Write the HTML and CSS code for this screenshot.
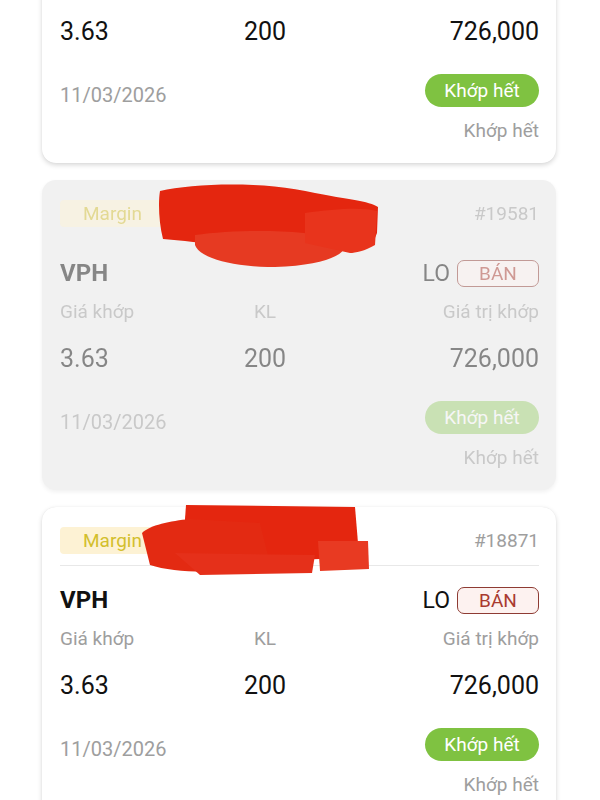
FILE: index.html
```html
<!DOCTYPE html>
<html lang="vi">
<head>
<meta charset="utf-8">
<title>Orders</title>
<link rel="stylesheet" href="styles.css">
</head>
<body>
<div class="list">
  <div class="card">
    <div class="content">
      <div class="head"><span class="badge">Margin</span><span class="hash">#19600</span></div>
      <div class="divider"></div>
      <div class="sym-row"><span class="sym">VPH</span><span class="type">LO <span class="side">BÁN</span></span></div>
      <div class="grid labels"><span>Giá khớp</span><span class="mid">KL</span><span class="r">Giá trị khớp</span></div>
      <div class="grid values"><span>3.63</span><span class="mid">200</span><span class="r">726,000</span></div>
      <div class="foot"><span class="date">11/03/2026</span><span class="pill">Khớp hết</span></div>
      <div class="status">Khớp hết</div>
    </div>
  </div>

  <div class="card disabled">
    <div class="content">
      <div class="head"><span class="badge">Margin</span><span class="hash">#19581</span></div>
      <div class="divider"></div>
      <div class="sym-row"><span class="sym">VPH</span><span class="type">LO <span class="side">BÁN</span></span></div>
      <div class="grid labels"><span>Giá khớp</span><span class="mid">KL</span><span class="r">Giá trị khớp</span></div>
      <div class="grid values"><span>3.63</span><span class="mid">200</span><span class="r">726,000</span></div>
      <div class="foot"><span class="date">11/03/2026</span><span class="pill">Khớp hết</span></div>
      <div class="status">Khớp hết</div>
    </div>
    <svg class="scribble s2" width="240" height="100" viewBox="0 0 240 100">
      <path d="M5 8 C40 0 110 -2 160 10 C190 16 215 18 223 24 L222 50 C218 62 210 66 196 68 L150 66 C120 64 60 62 30 58 L8 56 C4 40 3 20 5 8 Z" fill="#e4260f"/>
      <path d="M40 52 C80 46 150 46 185 56 C200 66 180 82 120 84 C80 84 45 76 40 62 Z" fill="#e63a22"/>
      <path d="M150 30 C180 26 205 24 222 28 L220 62 C210 68 200 70 195 70 L150 60 Z" fill="#e8341c"/>
    </svg>
  </div>

  <div class="card">
    <div class="content">
      <div class="head"><span class="badge">Margin</span><span class="hash">#18871</span></div>
      <div class="divider"></div>
      <div class="sym-row"><span class="sym">VPH</span><span class="type">LO <span class="side">BÁN</span></span></div>
      <div class="grid labels"><span>Giá khớp</span><span class="mid">KL</span><span class="r">Giá trị khớp</span></div>
      <div class="grid values"><span>3.63</span><span class="mid">200</span><span class="r">726,000</span></div>
      <div class="foot"><span class="date">11/03/2026</span><span class="pill">Khớp hết</span></div>
      <div class="status">Khớp hết</div>
    </div>
    <svg class="scribble s3" width="240" height="80" viewBox="0 0 240 80">
      <path d="M46 2 L215 4 L218 40 L180 56 L60 60 L44 30 Z" fill="#e4260f"/>
      <path d="M2 30 C10 22 30 18 50 16 L120 20 L130 60 C100 70 40 72 10 62 Z" fill="#e32a12"/>
      <path d="M178 38 L228 38 L229 66 L180 68 Z" fill="#e83a22"/>
      <path d="M35 50 L175 52 L172 70 L60 72 Z" fill="#e5301a"/>
    </svg>
  </div>
</div>
</body>
</html>
```

FILE: styles.css
```css
* { box-sizing: border-box; }
html, body { margin: 0; padding: 0; background: #ffffff; }
body {
  font-family: Roboto, "Noto Sans", "Liberation Sans", sans-serif;
  color: #111;
  width: 600px;
  height: 800px;
  overflow: hidden;
}
.list {
  margin-top: -147px;
  padding: 0 44px 0 42px;
  display: flex;
  flex-direction: column;
  gap: 17px;
}
.card {
  position: relative;
  height: 310px;
  background: #fff;
  border-radius: 14px;
  box-shadow: 0 2px 5px rgba(0,0,0,0.16), 0 0 1px rgba(0,0,0,0.08);
  padding: 20px 17px 0 18px;
}
.card.disabled { background: #f1f1f1; box-shadow: 0 2px 4px rgba(0,0,0,0.06); }
.card.disabled .content { opacity: 0.48; }
.card.disabled .divider { background: transparent; }
.card.disabled .pill { opacity: 0.72; }
.head {
  height: 27px;
  display: flex;
  align-items: center;
  justify-content: space-between;
}
.badge {
  height: 27px;
  line-height: 27px;
  padding: 0 60px 0 23px;
  background: #fdf2d4;
  color: #d3bf2e;
  font-size: 19px;
  border-radius: 4px;
}
.hash { font-size: 19px; color: #9e9e9e; }
.divider { height: 1px; background: #e8e8e8; margin-top: 11px; }
.sym-row {
  margin-top: 19px;
  height: 30px;
  display: flex;
  align-items: center;
  justify-content: space-between;
}
.sym { font-size: 24px; font-weight: 700; }
.type { font-size: 23px; display: flex; align-items: center; gap: 7px; }
.side {
  display: inline-block;
  width: 82px;
  height: 27px;
  line-height: 25px;
  text-align: center;
  font-size: 19px;
  color: #a93a2f;
  background: #fdf2f0;
  border: 1.5px solid #8e3b33;
  border-radius: 7px;
}
.grid {
  display: grid;
  grid-template-columns: 150px 110px 1fr;
  align-items: center;
}
.grid .mid { text-align: center; }
.grid .r { text-align: right; }
.labels { margin-top: 11px; height: 24px; font-size: 19px; color: #9e9e9e; }
.values { margin-top: 20px; height: 30px; font-size: 25px; color: #111; }
.foot {
  margin-top: 28px;
  height: 42px;
  display: flex;
  align-items: flex-start;
  justify-content: space-between;
}
.date { font-size: 20px; line-height: 24px; margin-top: 9px; color: #9e9e9e; }
.pill {
  width: 114px;
  height: 33px;
  line-height: 33px;
  text-align: center;
  border-radius: 17px;
  background: #7fc241;
  color: #fff;
  font-size: 19px;
}
.status {
  margin-top: 3px;
  height: 24px;
  line-height: 24px;
  text-align: right;
  font-size: 19px;
  color: #9e9e9e;
}
.scribble { position: absolute; }
.s2 { left: 113px; top: 3px; }
.s3 { left: 98px; top: -4px; }
```
